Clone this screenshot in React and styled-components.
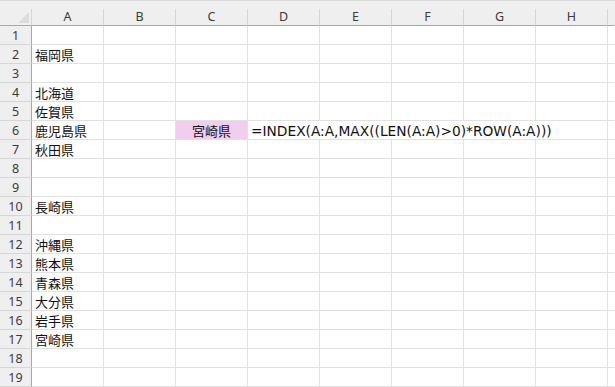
import React from 'react';
import styled, { createGlobalStyle } from 'styled-components';

const GlobalStyle = createGlobalStyle`
    html, body {
        margin: 0;
        padding: 0;
        background: #ffffff;
    }
    body {
        font-family: "Noto Sans", "Noto Sans CJK JP", sans-serif;
    }
`

const Sheet = styled.div`
    width: 615px;
    height: 387px;
    overflow: hidden;
    background: #efefef;
    border-top: 1px solid #dadada;
    box-sizing: border-box;
    display: flex;
    flex-direction: column;
`

const TopStrip = styled.div`
    height: 8px;
    flex: none;
`

const Grid = styled.div`
    display: grid;
    grid-template-columns: 32px repeat(8, 72px) 1fr;
    grid-auto-rows: 19px;
    grid-template-rows: 17px;
    background: #ffffff;
`

const Corner = styled.div`
    background: #efefef;
    border-right: 1px solid #d6d6d6;
    border-bottom: 1px solid #a8a8a8;
    display: flex;
    justify-content: flex-end;
    align-items: flex-end;
    padding: 0 2px 2px 0;
`

const Triangle = styled.div`
    width: 0;
    height: 0;
    border-left: 11px solid transparent;
    border-bottom: 11px solid #dcdcdc;
`

const ColHead = styled.div`
    background: #efefef;
    border-right: 1px solid ${p => p.$last ? '#efefef' : '#d6d6d6'};
    border-bottom: 1px solid #a8a8a8;
    display: flex;
    align-items: center;
    justify-content: center;
    font-size: 12.5px;
    color: #3b3b3b;
    line-height: 1;
    padding-top: 1px;
`

const RowHead = styled.div`
    background: #efefef;
    border-right: 1px solid #a8a8a8;
    border-bottom: 1px solid #d6d6d6;
    display: flex;
    align-items: center;
    justify-content: center;
    font-size: 12.5px;
    color: #3b3b3b;
    padding-top: 1px;
`

const Cell = styled.div`
    border-right: 1px solid ${p => p.$last ? '#ffffff' : '#e1e1e1'};
    border-bottom: 1px solid #e1e1e1;
    background: ${p => p.$fill || '#ffffff'};
    grid-column: ${p => p.$span ? `span ${p.$span}` : 'auto'};
    display: flex;
    align-items: center;
    justify-content: ${p => p.$center ? 'center' : 'flex-start'};
    padding: 1px 3px 0 3px;
    font-family: "Noto Sans CJK JP", sans-serif;
    font-size: 13px;
    color: #111;
    white-space: nowrap;
    overflow: visible;
    min-width: 0;
`

const Formula = styled.span`
    font-family: "DejaVu Sans", "Noto Sans", sans-serif;
    font-size: 13.75px;
    color: #111;
`

const cols = ['A', 'B', 'C', 'D', 'E', 'F', 'G', 'H'];

const colA = {
    2: '福岡県',
    4: '北海道',
    5: '佐賀県',
    6: '鹿児島県',
    7: '秋田県',
    10: '長崎県',
    12: '沖縄県',
    13: '熊本県',
    14: '青森県',
    15: '大分県',
    16: '岩手県',
    17: '宮崎県',
};

const renderRow = (r) => {
    const cells = [<RowHead key="h">{r}</RowHead>];
    cells.push(<Cell key="A">{colA[r] || ''}</Cell>);
    if (r === 6) {
        cells.push(<Cell key="B" />);
        cells.push(<Cell key="C" $fill="#f2cdee" $center>宮崎県</Cell>);
        cells.push(
            <Cell key="D" $span={5}>
                <Formula>=INDEX(A:A,MAX((LEN(A:A)&gt;0)*ROW(A:A)))</Formula>
            </Cell>
        );
    } else {
        cols.slice(1).forEach(c => cells.push(<Cell key={c} />));
    }
    cells.push(<Cell key="rest" $last />);
    return cells;
};

const App = () => {
    const rows = Array.from({ length: 19 }, (_, i) => i + 1);
    return (
        <>
            <GlobalStyle />
            <Sheet>
                <TopStrip />
                <Grid>
                    <Corner><Triangle /></Corner>
                    {cols.map(c => <ColHead key={c}>{c}</ColHead>)}
                    <ColHead $last />
                    {rows.map(r => renderRow(r))}
                </Grid>
            </Sheet>
        </>
    );
};

export default App;
